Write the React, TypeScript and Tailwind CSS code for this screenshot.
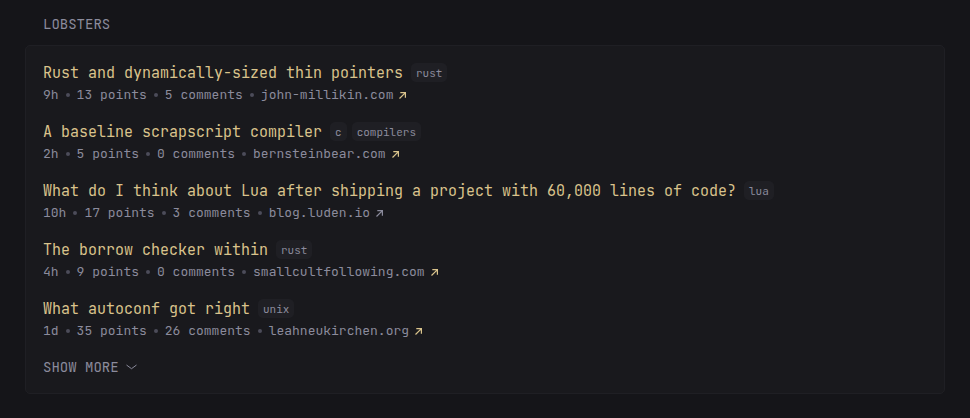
type Post = {
  title: string;
  tags: string[];
  age: string;
  points: number;
  comments: number;
  domain: string;
  visited?: boolean;
};

const posts: Post[] = [
  { title: "Rust and dynamically-sized thin pointers", tags: ["rust"], age: "9h", points: 13, comments: 5, domain: "john-millikin.com" },
  { title: "A baseline scrapscript compiler", tags: ["c", "compilers"], age: "2h", points: 5, comments: 0, domain: "bernsteinbear.com" },
  { title: "What do I think about Lua after shipping a project with 60,000 lines of code?", tags: ["lua"], age: "10h", points: 17, comments: 3, domain: "blog.luden.io", visited: true },
  { title: "The borrow checker within", tags: ["rust"], age: "4h", points: 9, comments: 0, domain: "smallcultfollowing.com" },
  { title: "What autoconf got right", tags: ["unix"], age: "1d", points: 35, comments: 26, domain: "leahneukirchen.org" },
];

function Dot() {
  return <span aria-hidden="true" className="mx-[7px] size-1 shrink-0 rounded-full bg-[#4c4c59]" />;
}

function ExternalArrow({ visited }: { visited?: boolean }) {
  return (
    <svg
      aria-hidden="true"
      viewBox="0 0 7 7"
      className={visited ? "ml-[6px] size-[7px] text-[#8b8b9c]" : "ml-[6px] size-[7px] text-[#d9c38c]"}
      fill="none"
      stroke="currentColor"
      strokeWidth="1.2"
    >
      <path d="M.5 6.5 6.2.8M1.3.7h5.1v5" />
    </svg>
  );
}

function PostItem({ post }: { post: Post }) {
  return (
    <li>
      <div className="flex h-6 items-start gap-2">
        <a href="#" className="text-[15px] leading-6 whitespace-nowrap text-[#d9c38c]">
          {post.title}
        </a>
        <ul className="flex gap-[5px] pt-[2px]">
          {post.tags.map((tag) => (
            <li key={tag} className="rounded-[5px] bg-[#1f1f24] px-[5px] pt-px text-[11px] leading-[18px]">
              {tag}
            </li>
          ))}
        </ul>
      </div>
      <div className="flex h-5 items-center text-[13px] leading-5 whitespace-nowrap">
        <span>{post.age}</span>
        <Dot />
        <span>{`${post.points} points`}</span>
        <Dot />
        <span>{`${post.comments} comments`}</span>
        <Dot />
        <a href="#" className="flex items-center">
          {post.domain}
          <ExternalArrow visited={post.visited} />
        </a>
      </div>
    </li>
  );
}

export default function App() {
  return (
    <main className="min-h-screen bg-[#151519] px-[25px] py-3 font-['JetBrains_Mono','DejaVu_Sans_Mono',monospace] text-[#8b8b9c]">
      <h2 className="px-[18px] text-[14px] leading-6">LOBSTERS</h2>
      <section className="mt-[9px] rounded-[5px] border border-[#1f1f24] bg-[#19191d] px-[17px] pt-[15px] pb-[14px]">
        <ul className="flex flex-col gap-[15px]">
          {posts.map((post) => (
            <PostItem key={post.title} post={post} />
          ))}
        </ul>
        <button type="button" className="mt-[14px] flex items-center gap-[7px] text-[14px] leading-6">
          SHOW MORE
          <svg aria-hidden="true" viewBox="0 0 11 6" className="h-[6px] w-[11px]" fill="none" stroke="currentColor" strokeWidth="1">
            <path d="M.5 1 5.5 4.7 10.5 1" />
          </svg>
        </button>
      </section>
    </main>
  );
}
